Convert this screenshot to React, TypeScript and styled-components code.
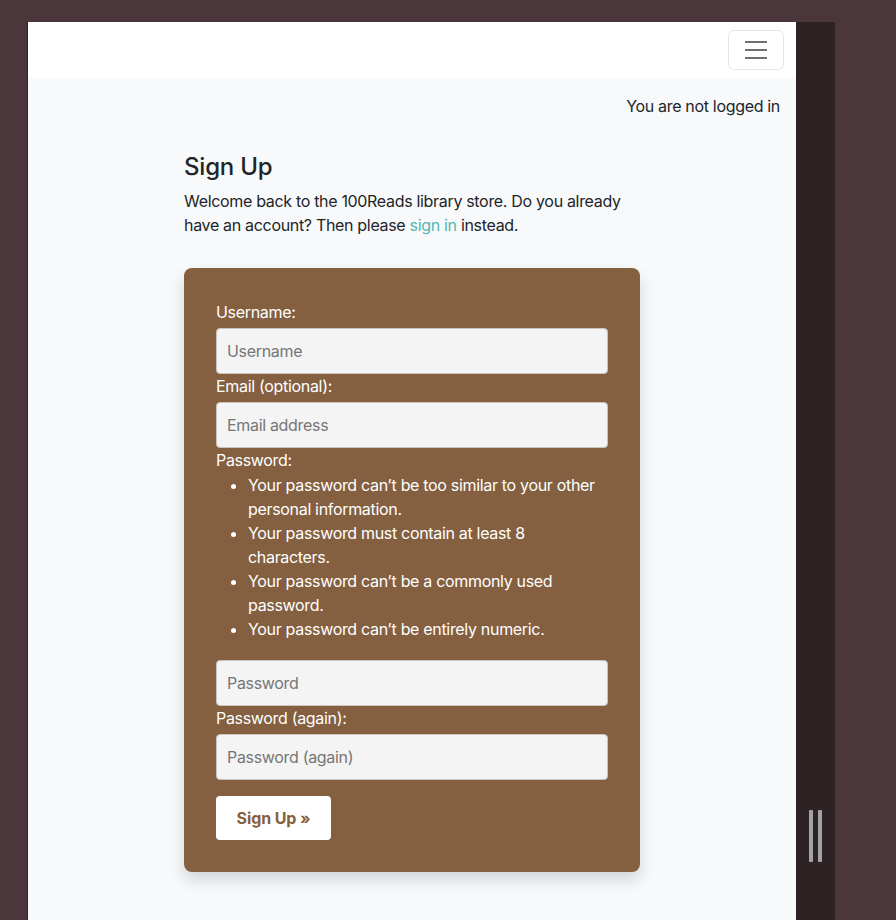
import React from "react";
import styled, { createGlobalStyle } from "styled-components";

const GlobalStyle = createGlobalStyle`
  html, body {
    margin: 0;
    padding: 0;
    background: #4b363b;
    font-family: "Inter", "Noto Sans", "Liberation Sans", sans-serif;
    font-size: 16px;
    letter-spacing: -0.32px;
    color: #212529;
  }
  * { box-sizing: border-box; }
`;

const Frame = styled.div`
  display: flex;
  padding: 22px 0 0 27px;
  min-height: 920px;
  overflow: hidden;
`;

const Page = styled.div`
  width: 769px;
  height: 898px;
  border-left: 1px solid #2d2223;
  background: #f8f9fa;
  display: flex;
  flex-direction: column;
`;

const Navbar = styled.nav`
  height: 56px;
  background: #ffffff;
  display: flex;
  align-items: center;
  justify-content: flex-end;
  padding-right: 12px;
`;

const Toggler = styled.button`
  width: 56px;
  height: 40px;
  border: 1px solid rgba(0, 0, 0, 0.1);
  border-radius: 6px;
  background: transparent;
  display: flex;
  align-items: center;
  justify-content: center;
  padding: 0;
`;

const Status = styled.div`
  text-align: right;
  padding: 16px 16px 0 0;
  line-height: 24px;
  color: #212529;
`;

const Container = styled.main`
  width: 456px;
  margin: 35px auto 0;
`;

const Title = styled.h2`
  margin: 0 0 7px;
  font-size: 24px;
  font-weight: 500;
  line-height: 28.8px;
  letter-spacing: -0.2px;
  color: #212529;
`;

const Intro = styled.p`
  margin: 0;
  line-height: 24px;
`;

const Link = styled.a`
  color: #4fb8b5;
  text-decoration: none;
`;

const Card = styled.section`
  margin-top: 31px;
  background: #845f40;
  border-radius: 8px;
  padding: 32px;
  box-shadow: 0 8px 16px rgba(0, 0, 0, 0.15);
  color: #ffffff;
`;

const Label = styled.label`
  display: block;
  line-height: 24px;
  margin-bottom: 4px;
  color: #ffffff;
`;

const Input = styled.input`
  display: block;
  width: 100%;
  height: 46px;
  margin: 0;
  padding: 0 10px;
  font-family: inherit;
  font-size: 16px;
  letter-spacing: -0.32px;
  background: #f4f4f4;
  border: 1px solid #c9c4bf;
  border-radius: 4px;
  color: #212529;
  &::placeholder {
    color: #767676;
  }
`;

const Rules = styled.ul`
  margin: -3px 0 19px;
  padding-left: 32px;
  line-height: 24px;
  color: #ffffff;
`;

const Submit = styled.button`
  display: block;
  margin: 16px 0 0;
  height: 44px;
  width: 115px;
  padding: 0;
  background: #ffffff;
  color: #845f40;
  border: none;
  border-radius: 4px;
  font-family: inherit;
  font-size: 16px;
  letter-spacing: -0.1px;
  font-weight: 700;
`;

const Strip = styled.div`
  width: 39px;
  height: 898px;
  background: #2d2224;
  display: flex;
  align-items: flex-end;
  justify-content: center;
  gap: 5px;
  padding: 0 0 58px 0;
`;

const Grip = styled.span`
  width: 4px;
  height: 52px;
  background: #a3a3a3;
  border-radius: 1px;
`;

export default function App() {
  return (
    <>
      <GlobalStyle />
      <Frame>
        <Page>
          <Navbar>
            <Toggler aria-label="Toggle navigation">
              <svg width="30" height="30" viewBox="0 0 30 30">
                <path
                  d="M4 7h22M4 15h22M4 23h22"
                  stroke="rgba(33,37,41,0.65)"
                  strokeWidth="2"
                  strokeLinecap="butt"
                />
              </svg>
            </Toggler>
          </Navbar>
          <Status>You are not logged in</Status>
          <Container>
            <Title>Sign Up</Title>
            <Intro>
              Welcome back to the 100Reads library store. Do you already have an account? Then please{" "}
              <Link href="#">sign in</Link> instead.
            </Intro>
            <Card>
              <form onSubmit={(e) => e.preventDefault()}>
                <Label htmlFor="u">Username:</Label>
                <Input id="u" placeholder="Username" />
                <Label htmlFor="e">Email (optional):</Label>
                <Input id="e" placeholder="Email address" />
                <Label htmlFor="p1">Password:</Label>
                <Rules>
                  <li>Your password can’t be too similar to your other personal information.</li>
                  <li>Your password must contain at least 8 characters.</li>
                  <li>Your password can’t be a commonly used password.</li>
                  <li>Your password can’t be entirely numeric.</li>
                </Rules>
                <Input id="p1" type="password" placeholder="Password" />
                <Label htmlFor="p2">Password (again):</Label>
                <Input id="p2" type="password" placeholder="Password (again)" />
                <Submit type="submit">Sign Up »</Submit>
              </form>
            </Card>
          </Container>
        </Page>
        <Strip>
          <Grip />
          <Grip />
        </Strip>
      </Frame>
    </>
  );
}
